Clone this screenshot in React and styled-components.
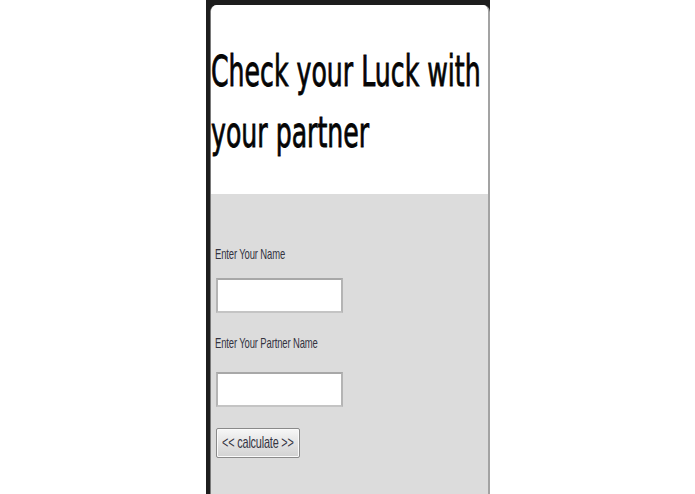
import React from "react";
import styled, { createGlobalStyle } from "styled-components";

const Global = createGlobalStyle`
  html, body { margin: 0; padding: 0; background: #ffffff; }
  body { font-family: "Liberation Sans", Arial, sans-serif; }
`;

const Frame = styled.div`
  width: 284px;
  min-height: 100vh;
  margin: 0 auto;
  box-sizing: border-box;
  background: #1d1d1d;
  padding: 5px 0 0 4px;
  display: flex;
  flex-direction: column;
`;

const Card = styled.div`
  flex: 1;
  display: flex;
  flex-direction: column;
  background: #ffffff;
  border-left: 1px solid #7a7a7a;
  border-right: 2px solid #a3a3a3;
  border-radius: 7px 7px 0 0;
  overflow: hidden;
`;

const Header = styled.header`
  background: #ffffff;
  padding: 36px 0 31px 0;
  overflow: hidden;
`;

const Title = styled.h1`
  margin: 0;
  font-family: "DejaVu Sans", Verdana, sans-serif;
  font-weight: normal;
  font-size: 42px;
  line-height: 61px;
  color: #050505;
  -webkit-text-stroke: 0.9px #050505;
  white-space: nowrap;
  transform: scaleX(0.6);
  transform-origin: left top;
`;

const Body = styled.section`
  flex: 1;
  background: #dcdcdc;
  padding: 51px 4px 0 4px;
  display: flex;
  flex-direction: column;
  align-items: flex-start;
`;

const Label = styled.label`
  display: block;
  font-family: "Liberation Sans", Arial, sans-serif;
  font-size: 15px;
  line-height: 18px;
  color: #33333f;
  white-space: nowrap;
  letter-spacing: -0.2px;
  transform: scaleX(0.63);
  transform-origin: left top;
  margin-top: ${(p) => p.$top || 0}px;
`;

const Input = styled.input`
  display: block;
  box-sizing: border-box;
  width: 127px;
  height: 35px;
  margin: ${(p) => p.$top}px 0 0 1px;
  background: #ffffff;
  border: 2px solid #b4b4b4;
  border-top-color: #a8a8a8;
  border-bottom-color: #c4c4c4;
  padding: 0 4px;
`;

const Button = styled.button`
  box-sizing: border-box;
  width: 84px;
  height: 30px;
  margin: 21px 0 0 1px;
  padding: 0;
  border: 1px solid #8a8a8a;
  border-radius: 2px;
  background: linear-gradient(#f7f7f7, #e2e2e2 55%, #d2d2d2);
  box-shadow: inset 0 0 0 1px #fbfbfb;
  display: flex;
  align-items: center;
  justify-content: center;
  overflow: hidden;
`;

const ButtonText = styled.span`
  font-family: "Liberation Sans", Arial, sans-serif;
  font-size: 17px;
  color: #33333f;
  white-space: nowrap;
  letter-spacing: -0.3px;
  transform: scaleX(0.64);
`;

export default function App() {
  return (
    <>
      <Global />
      <Frame>
        <Card>
          <Header>
            <Title>
              Check your Luck with
              <br />
              your partner
            </Title>
          </Header>
          <Body>
            <Label htmlFor="name">Enter Your Name</Label>
            <Input id="name" type="text" $top={15} />
            <Label htmlFor="partner" $top={21}>Enter Your Partner Name</Label>
            <Input id="partner" type="text" $top={20} />
            <Button type="button">
              <ButtonText>&lt;&lt; calculate &gt;&gt;</ButtonText>
            </Button>
          </Body>
        </Card>
      </Frame>
    </>
  );
}
